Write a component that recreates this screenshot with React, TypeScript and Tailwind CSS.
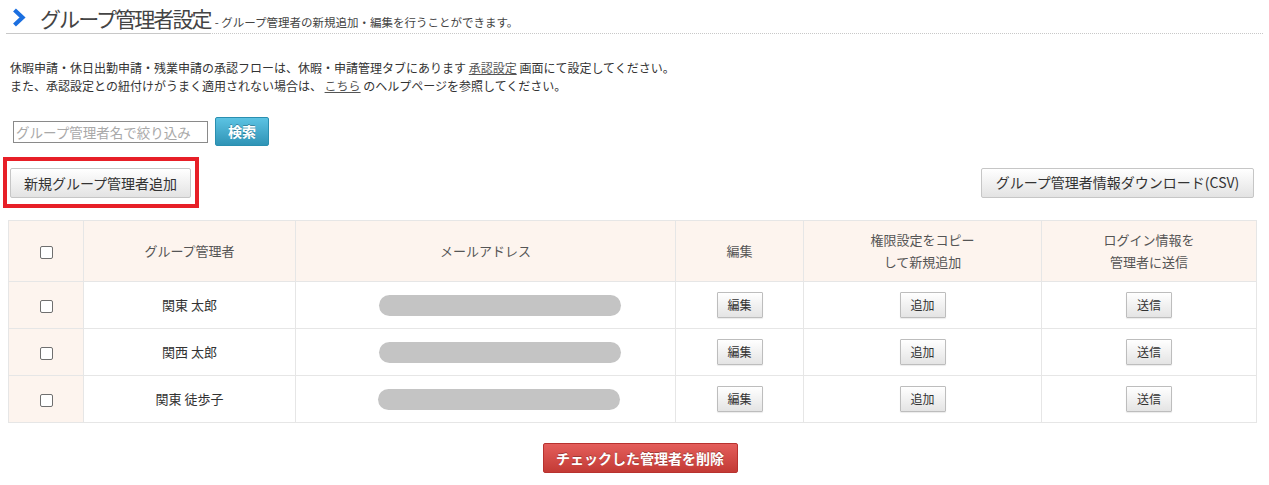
import React from "react";

const FONT = { fontFamily: '"Noto Sans CJK JP", "Noto Sans", sans-serif' };

const rows = [
  { name: "関東 太郎", pill: "ml-[83px]" },
  { name: "関西 太郎", pill: "ml-[83px]" },
  { name: "関東 徒歩子", pill: "ml-[82px]" },
];

function CheckBox() {
  return <span className="inline-block w-[13px] h-[13px] border border-[#6f6f6f] rounded-[2px] bg-white align-middle" />;
}

function SmallButton({ label }: { label: string }) {
  return (
    <button className="w-[46px] h-[26px] text-[12px] text-[#333] border border-[#bdbdbd] rounded-[1px] bg-gradient-to-b from-white to-[#e4e4e4] shadow-[0_1px_1px_rgba(0,0,0,0.08)]">
      {label}
    </button>
  );
}

export default function App() {
  return (
    <div className="w-[1269px] h-[485px] bg-white text-[#333] overflow-hidden" style={FONT}>
      {/* title */}
      <div className="mx-[6px] h-[34px] flex items-end border-b border-dotted border-[#c8c8c8]">
        <div className="flex items-center h-full border-b border-[#c8c8c8] -mb-px">
          <svg width="14" height="19" viewBox="0 0 14 19" className="ml-[6px] mr-[14px] mt-[1px]">
            <path d="M2.5 2 L10.5 9.5 L2.5 17" fill="none" stroke="#1b6fe0" strokeWidth="4.2" strokeLinejoin="miter" />
          </svg>
          <span className="text-[21px] leading-none tracking-[-1.9px] text-[#444] mt-[2px]">グループ管理者設定</span>
        </div>
        <span className="text-[11.5px] text-[#444] ml-[4px] mb-[5px] leading-none">- グループ管理者の新規追加・編集を行うことができます。</span>
      </div>

      {/* notes */}
      <div className="mt-[25px] ml-[10px] text-[12px] leading-[18px] text-[#333]">
        <p>
          休暇申請・休日出勤申請・残業申請の承認フローは、休暇・申請管理タブにあります <span className="underline text-[#555]">承認設定</span> 画面にて設定してください。
        </p>
        <p>
          また、承認設定との紐付けがうまく適用されない場合は、 <span className="underline text-[#555]">こちら</span> のヘルプページを参照してください。
        </p>
      </div>

      {/* search */}
      <div className="mt-[22px] ml-[13px] flex items-center gap-[7px]">
        <input
          placeholder="グループ管理者名で絞り込み"
          className="w-[195px] h-[22px] border border-[#8a8a8a] px-[2px] text-[13.5px] placeholder:text-[#a9a9a9] outline-none"
        />
        <button className="w-[54px] h-[29px] rounded-[2px] border border-[#2a8fb0] bg-gradient-to-b from-[#5cc3e3] to-[#2f94b6] text-white text-[14px] font-bold [text-shadow:0_-1px_0_rgba(0,0,0,0.25)]">
          検索
        </button>
      </div>

      {/* action buttons */}
      <div className="mt-[11px] flex items-center justify-between pl-[3px] pr-[15px]">
        <div className="border-[4px] border-[#e71f27] w-[196px] h-[51px] pl-[3px] pt-[7px]">
          <button className="w-[181px] h-[30px] border border-[#c6c6c6] rounded-[2px] bg-gradient-to-b from-white to-[#e3e3e3] text-[14px] text-[#333]">
            新規グループ管理者追加
          </button>
        </div>
        <button className="w-[273px] h-[30px] border border-[#c6c6c6] rounded-[2px] bg-gradient-to-b from-white to-[#e3e3e3] text-[14px] text-[#333]">
          グループ管理者情報ダウンロード(CSV)
        </button>
      </div>

      {/* table */}
      <table className="mt-[12px] ml-[8px] w-[1248px] border-collapse table-fixed text-[13px]">
        <colgroup>
          <col className="w-[75px]" />
          <col className="w-[212px]" />
          <col className="w-[380px]" />
          <col className="w-[128px]" />
          <col className="w-[238px]" />
          <col className="w-[215px]" />
        </colgroup>
        <thead>
          <tr className="h-[61px] bg-[#fdf4ee] text-[#555]">
            <th className="border border-[#e6e6e6] font-normal"><CheckBox /></th>
            <th className="border border-[#e6e6e6] font-normal">グループ管理者</th>
            <th className="border border-[#e6e6e6] font-normal">メールアドレス</th>
            <th className="border border-[#e6e6e6] font-normal">編集</th>
            <th className="border border-[#e6e6e6] font-normal leading-[22px]">権限設定をコピー<br />して新規追加</th>
            <th className="border border-[#e6e6e6] font-normal leading-[22px]">ログイン情報を<br />管理者に送信</th>
          </tr>
        </thead>
        <tbody>
          {rows.map((r) => (
            <tr key={r.name} className="h-[47px]">
              <td className="border border-[#e6e6e6] bg-[#fdf4ee] text-center"><CheckBox /></td>
              <td className="border border-[#e6e6e6] text-center text-[#333]">{r.name}</td>
              <td className="border border-[#e6e6e6]">
                <div className={`${r.pill} w-[242px] h-[21px] rounded-full bg-[#c4c4c4]`} />
              </td>
              <td className="border border-[#e6e6e6] text-center"><SmallButton label="編集" /></td>
              <td className="border border-[#e6e6e6] text-center"><SmallButton label="追加" /></td>
              <td className="border border-[#e6e6e6] text-center"><SmallButton label="送信" /></td>
            </tr>
          ))}
        </tbody>
      </table>

      <div className="mt-[20px] flex justify-center pl-[11px]">
        <button className="w-[195px] h-[30px] rounded-[2px] border border-[#b8322f] bg-gradient-to-b from-[#e45e5b] to-[#c33a35] text-white text-[14px] font-bold [text-shadow:0_-1px_0_rgba(0,0,0,0.3)]">
          チェックした管理者を削除
        </button>
      </div>
    </div>
  );
}
